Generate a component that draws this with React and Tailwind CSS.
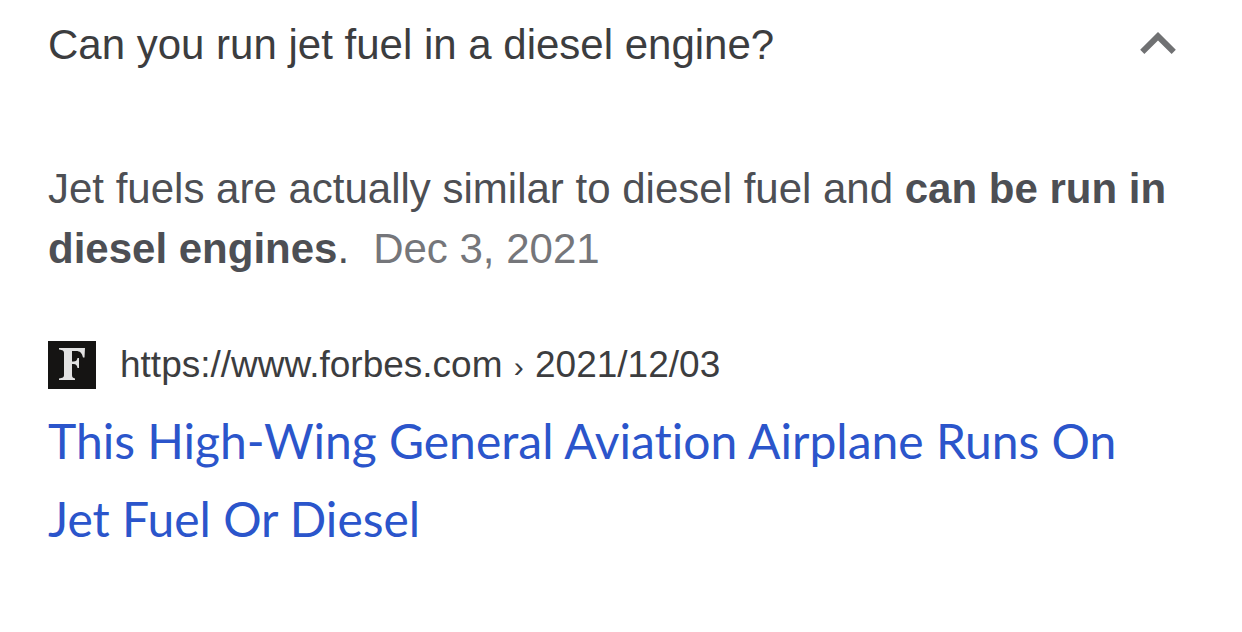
import { useState } from "react";

export default function App() {
  const [open, setOpen] = useState(true);
  return (
    <main className="min-h-screen bg-white px-12 pt-[15px] pb-16 font-['Liberation_Sans',sans-serif] text-[#4d4f54]">
      <h2>
        <button
          type="button"
          aria-expanded={open}
          aria-controls="answer"
          onClick={() => setOpen(!open)}
          className="flex w-full items-start justify-between pr-[18px] text-left text-[42px] leading-[60px] text-[#3c3d3f]"
        >
          <span>Can you run jet fuel in a diesel engine?</span>
          <span className="shrink-0 pt-[17px]">
            <svg viewBox="6 8 12 7.41" className="h-[22px] w-9" aria-hidden="true">
              <path d="M12 8l-6 6 1.41 1.41L12 10.83l4.59 4.58L18 14z" fill="#707173" />
            </svg>
          </span>
        </button>
      </h2>
      {open && (
        <section id="answer" className="pt-[84px]">
          <p className="text-[42px] leading-[60px]">
            Jet fuels are actually similar to diesel fuel and <b>can be run in diesel engines</b>.
            <span className="ml-6 text-[#75767a]">Dec 3, 2021</span>
          </p>
          <a href="https://www.forbes.com" className="mt-[62px] block">
            <span className="flex items-center gap-6 text-[37px] leading-[48px] text-[#3c3d3f]">
              <svg viewBox="0 0 48 48" className="size-12 shrink-0" aria-hidden="true">
                <rect width="48" height="48" fill="#151413" />
                <path
                  d="M11 7H37L36.5 16.5H35C34 12 32 10 28 10H24V20.5H25.5C28 20.5 29 19.5 29.5 17H31V27H29.5C29 24.5 28 23 25.5 23H24V34C24 36.5 25 37 27 37.5V39H11V37.5C14.5 37 16 36.5 16 34V12C16 9.5 14.5 9 11 8.5Z"
                  fill="#e2e2e2"
                />
              </svg>
              <span>
                https://www.forbes.com <span className="mx-px text-[30px] leading-none">›</span> 2021/12/03
              </span>
            </span>
            <h3 className="mt-[13px] pr-12 font-['Lato',sans-serif] text-[48px] leading-[78px] text-[#2b55cb] [font-variant-ligatures:none]">
              This High-Wing General Aviation Airplane Runs On Jet Fuel Or Diesel
            </h3>
          </a>
        </section>
      )}
    </main>
  );
}
